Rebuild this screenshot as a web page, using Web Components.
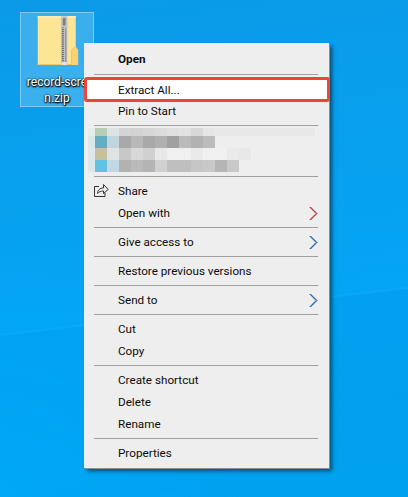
<!DOCTYPE html>
<html><head><meta charset="utf-8">
<style>
html,body{margin:0;padding:0;height:100%;overflow:hidden}
body{font-family:Roboto,"Liberation Sans",sans-serif}
</style></head><body>
<win-desktop>
  <desk-icon></desk-icon>
  <context-menu>
    <menu-item bold>Open</menu-item>
    <menu-sep style="--h:8px;--p:4px"></menu-sep>
    <menu-item highlight>Extract All...</menu-item>
    <menu-item>Pin to Start</menu-item>
    <menu-sep style="--h:6px;--p:3px"></menu-sep>
    <pixel-block></pixel-block>
    <menu-sep style="--h:8px;--p:4px"></menu-sep>
    <menu-item share>Share</menu-item>
    <menu-item arrow="red">Open with</menu-item>
    <menu-sep></menu-sep>
    <menu-item arrow="blue">Give access to</menu-item>
    <menu-sep></menu-sep>
    <menu-item>Restore previous versions</menu-item>
    <menu-sep></menu-sep>
    <menu-item arrow="blue">Send to</menu-item>
    <menu-sep></menu-sep>
    <menu-item>Cut</menu-item>
    <menu-item>Copy</menu-item>
    <menu-sep></menu-sep>
    <menu-item>Create shortcut</menu-item>
    <menu-item>Delete</menu-item>
    <menu-item>Rename</menu-item>
    <menu-sep></menu-sep>
    <menu-item>Properties</menu-item>
  </context-menu>
</win-desktop>
<script>
function def(name, html){
  customElements.define(name, class extends HTMLElement{
    connectedCallback(){
      if(this.shadowRoot) return;
      const r=this.attachShadow({mode:'open'});
      r.innerHTML=typeof html==='function'?html(this):html;
    }
  });
}
def('win-desktop',`<style>
:host{display:block;position:relative;width:408px;height:497px;overflow:hidden;
background:radial-gradient(circle at 0 100%,rgba(0,175,255,.5),rgba(0,175,255,0) 250px),linear-gradient(173.4deg,#0b9ae7 0%,#04a5f5 61.3%,#0caaf7 61.5%,#02a0f0 61.9%,#00a1ef 100%);padding:12px 0 0 20px;box-sizing:border-box}
</style><slot></slot>`);
def('desk-icon',`<style>
:host{display:flex;flex-direction:column;align-items:center;box-sizing:border-box;width:74px;height:95px;
background:rgba(255,255,255,.2);border:1px solid rgba(255,255,255,.35);padding-top:3px;
font:12px/16px Roboto,"Liberation Sans",sans-serif;color:#fff}
.t{margin-top:8px;text-align:center;white-space:nowrap;text-shadow:0 1px 2px #000,0 0 2px #000,1px 1px 1px rgba(0,0,0,.8)}
svg{display:block}
</style>
<svg width="44" height="52" viewBox="0 0 44 52">
<path d="M2 0H41.500V51H2Z" fill="#fde596"/>
<path d="M2 0H41.500V2H2Z" fill="#feecb4"/>
<path d="M2 50H41.500V51H2Z" fill="#eec76a"/>
<path d="M37 51V37Q37 35 38.500 34L40.500 32Q41.500 31.500 42 32.500L44 35V51Z" fill="#f8d272"/>
<path d="M37 51V37Q37 35 38.500 34L40.500 32" fill="none" stroke="#e6bb58" stroke-width=".7"/>
<rect x="26" y="8" width="7" height="42" fill="#cfcfcf"/>
<rect x="27" y="10" width="2.200" height="38" fill="#5e5e5e" stroke="none"/>
<path d="M27 11H33M27 13H33M27 15H33M27 17H33M27 19H33M27 21H33M27 23H33M27 25H33M27 27H33M27 29H33M27 31H33M27 33H33M27 35H33M27 37H33M27 39H33M27 41H33M27 43H33M27 45H33M27 47H33" stroke="#dcdcdc" stroke-width=".8"/>
<rect x="30" y="10" width="2" height="38" fill="#6a6a6a" opacity=".55"/>
<rect x="26" y="0" width="7" height="12" rx="2" fill="#c6c6c6"/>
<rect x="28" y="2" width="3" height="8" rx="1" fill="#808080"/>
<rect x="27" y="48" width="5" height="3" fill="#e4e4e4"/>
</svg>
<div class="t">record-scre<br>n.zip</div>`);
def('context-menu',`<style>
:host{display:block;position:absolute;left:84px;top:43px;width:245px;height:425px;box-sizing:border-box;
background:#eeeeee;padding:5px 0 0;box-shadow:1px 1px 0 #8f8f8f,3px 3px 4px rgba(0,0,0,.55);
font:11.7px/22px Roboto,"Liberation Sans",sans-serif;color:#0c0c0c}
</style><slot></slot>`);
def('menu-sep',`<style>
:host{display:block;height:var(--h,7px);padding-top:var(--p,3px);box-sizing:border-box}
div{height:1px;background:#a0a0a0;margin:0 11px 0 10px}
</style><div></div>`);
def('menu-item',el=>{
  const a=el.getAttribute('arrow');
  const left=a==='red'?'#e8552f':'#3f8ad0', right=a==='red'?'#8a6ab0':'#2f80d8', mid=a==='red'?'#b8261c':'#2c4f80';
  const p='M1 1L7.500 7.500L1 14';
  return `<style>
:host{display:flex;align-items:center;height:22px;box-sizing:border-box;padding-left:34px;position:relative}
:host([bold]){font-weight:700}
:host([highlight]){background:#fff;outline:3px solid #e9453a;outline-offset:-2px;border-radius:2px;margin-left:1px;padding-left:33px;height:23px;margin-bottom:-1px}
.g{position:absolute;left:10px;top:3px}
.a{position:absolute;right:11px;top:4px}
</style>${el.hasAttribute('share')?`<svg class="g" width="15" height="15" viewBox="0 0 15 15" fill="none" stroke="#333" stroke-width="1"><path d="M5 3.500H.5V13.500H11V10"/><path d="M3.500 10.500C3.500 7 6 5 9.500 5V1.500L14.200 6.500L9.500 10.500V8C7 8 5 8.500 3.500 10.500Z"/></svg>`:''}<slot></slot>${a?`<svg class="a" width="9" height="15" viewBox="0 0 9 15" fill="none"><path d="${p}" stroke="${left}" stroke-width="1" transform="translate(-.5 0)"/><path d="${p}" stroke="${right}" stroke-width="1" transform="translate(.6 0)"/><path d="${p}" stroke="${mid}" stroke-width=".7"/></svg>`:''}`;
});
const px=[
 ['#e6ebeb','#b9ccb5','#dde2e3','#d4d4d4','#d2d2d2','#d6d6d6','#dbdbdb','#e0e0e0','#e2e2e2','#d8d8d8','#e6e6e6','#e8e8e8'],
 ['#d9e6ea','#63aebf','#c0d5dc','#a8a8a8','#b8b8b8','#a9a9a9','#b0b0b0','#a0a0a0','#bbbbbb','#b2b2b2','#bcbcbc','#eeeeee'],
 ['#e0e6e9','#c5c19b','#dfe3e6','#c8c8c8','#d8d8d8','#d0d0d0','#e8e8e8','#f0f0f0','#f0f0f0','#eaeaea','#f0f0f0','#f0f0f0','#eaeaea','#e8e8e8','#eeeeee'],
 ['#d9e6ea','#62c0e2','#c2d9e3','#b2b2b2','#bababa','#b4b4b4','#d0d0d0','#bfbfbf','#bfbfbf','#c6c6c6','#c8c8c8','#b5b5b5','#c8c8c8','#eeeeee']
];
def('pixel-block',()=>{
 let h='';
 px.forEach(row=>{
   row.forEach((c,i)=>{
     h+=`<i style="background:${c};grid-column:${i+1}${i===row.length-1?' / -1':''}"></i>`;
   });
 });
 return `<style>
:host{display:grid;height:44px;margin:0 14px 0 4px;grid-template-columns:7px repeat(14,12px) 1fr;grid-template-rows:8px 12px 12px 12px}
i{display:block}
</style>${h}`;
});
</script>
</body></html>
